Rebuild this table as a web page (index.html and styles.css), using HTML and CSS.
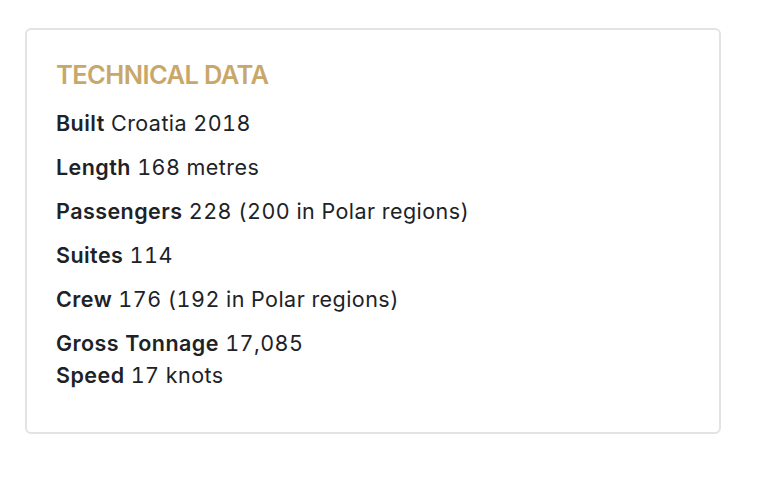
FILE: index.html
```html
<!DOCTYPE html>
<html lang="en">
<head>
<meta charset="utf-8">
<title>Technical Data</title>
<link rel="stylesheet" href="styles.css">
</head>
<body>
<section class="card">
  <h2 class="card-title">TECHNICAL DATA</h2>
  <p class="spec"><strong>Built</strong> Croatia 2018</p>
  <p class="spec"><strong>Length</strong> 168 metres</p>
  <p class="spec"><strong>Passengers</strong> 228 (200 in Polar regions)</p>
  <p class="spec"><strong>Suites</strong> 114</p>
  <p class="spec"><strong>Crew</strong> 176 (192 in Polar regions)</p>
  <p class="spec"><strong>Gross Tonnage</strong> 17,085<br><strong>Speed</strong> 17 knots</p>
</section>
</body>
</html>
```
FILE: styles.css
```css
html, body {
  background: #ffffff;
}
body {
  margin: 0;
  padding: 28px 37px 0 25px;
  font-family: "Inter", "Liberation Sans", sans-serif;
  color: #1d2227;
}
.card {
  border: 2px solid #e3e3e3;
  border-radius: 6px;
  padding: 29px 29px 29px;
}
.card-title {
  margin: 0 0 16px;
  font-size: 25.5px;
  line-height: 32px;
  font-weight: 600;
  letter-spacing: -0.6px;
  color: #c8a86a;
}
.spec {
  margin: 0 0 12px;
  font-size: 21.5px;
  line-height: 32px;
  letter-spacing: 0.45px;
  font-weight: 400;
  font-variant-numeric: tabular-nums;
}
.spec strong {
  font-weight: 600;
}
```
